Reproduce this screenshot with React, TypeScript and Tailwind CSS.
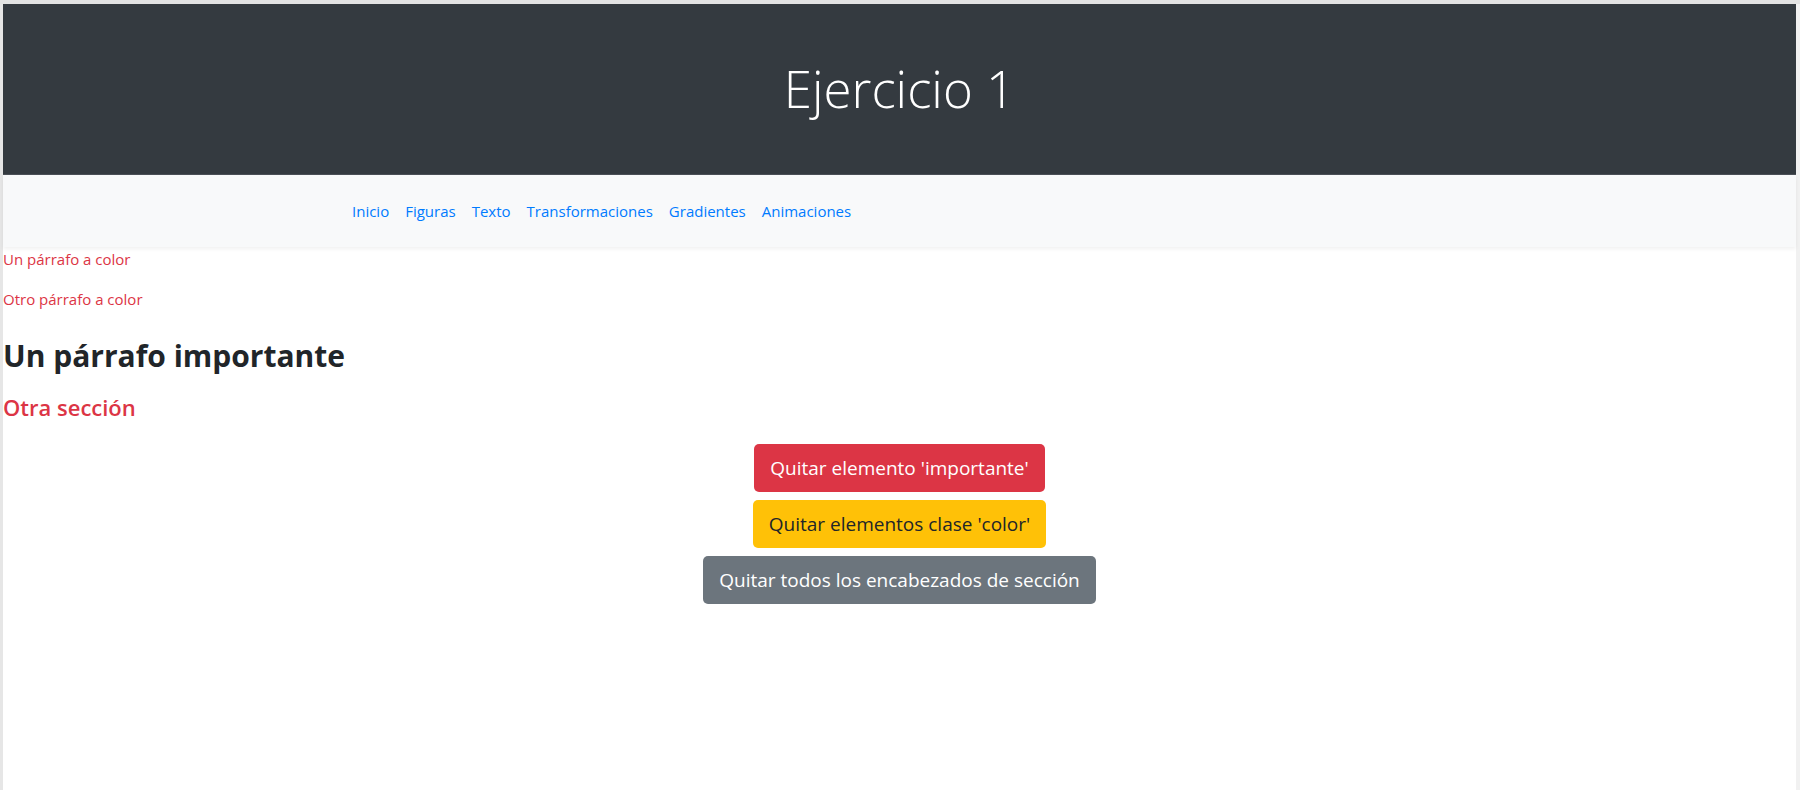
export default function App() {
  const font = { fontFamily: '"Open Sans", "Noto Sans", sans-serif' };
  return (
    <div className="flex h-[790px] w-[1800px] flex-col bg-[#e3e3e3]" style={font}>
      <div className="h-[4px] shrink-0" />
      <div className="flex flex-1">
        <div className="w-[3px] shrink-0 bg-[#e6e6e6]" />
        <main className="flex-1 bg-white">
          <header className="flex h-[171px] items-center justify-center border-b border-[#4b5057] bg-[#343a40]">
            <h1 className="text-[51px] font-light leading-[1.2] text-white">Ejercicio 1</h1>
          </header>
          <nav className="relative flex h-[72px] items-center bg-[#f8f9fa] pl-[341px] shadow-[0_2px_4px_rgba(0,0,0,0.06)]">
            {["Inicio", "Figuras", "Texto", "Transformaciones", "Gradientes", "Animaciones"].map((l) => (
              <a key={l} href="#" className="px-[8px] text-[15px] leading-6 text-[#007bff]">
                {l}
              </a>
            ))}
          </nav>
          <section>
            <p className="mb-4 text-[15px] leading-6 text-[#dc3545]">Un párrafo a color</p>
            <p className="mb-4 text-[15px] leading-6 text-[#dc3545]">Otro párrafo a color</p>
            <h2 className="mb-[20px] mt-[27px] text-[30px] font-bold leading-[1.2] text-[#212529]">
              Un párrafo importante
            </h2>
            <h3 className="mb-2 text-[22px] font-semibold leading-[1.2] text-[#dc3545]">Otra sección</h3>
            <div className="flex flex-col items-center gap-[8px] pt-[16px]">
              <button className="h-[48px] rounded-[5px] bg-[#dc3545] px-4 text-[19px] text-white">
                Quitar elemento 'importante'
              </button>
              <button className="h-[48px] rounded-[5px] bg-[#ffc107] px-4 text-[19px] text-[#212529]">
                Quitar elementos clase 'color'
              </button>
              <button className="h-[48px] rounded-[5px] bg-[#6c757d] px-4 text-[19px] text-white">
                Quitar todos los encabezados de sección
              </button>
            </div>
          </section>
        </main>
        <div className="w-[4px] shrink-0 bg-[#f1f1f1]" />
      </div>
    </div>
  );
}
